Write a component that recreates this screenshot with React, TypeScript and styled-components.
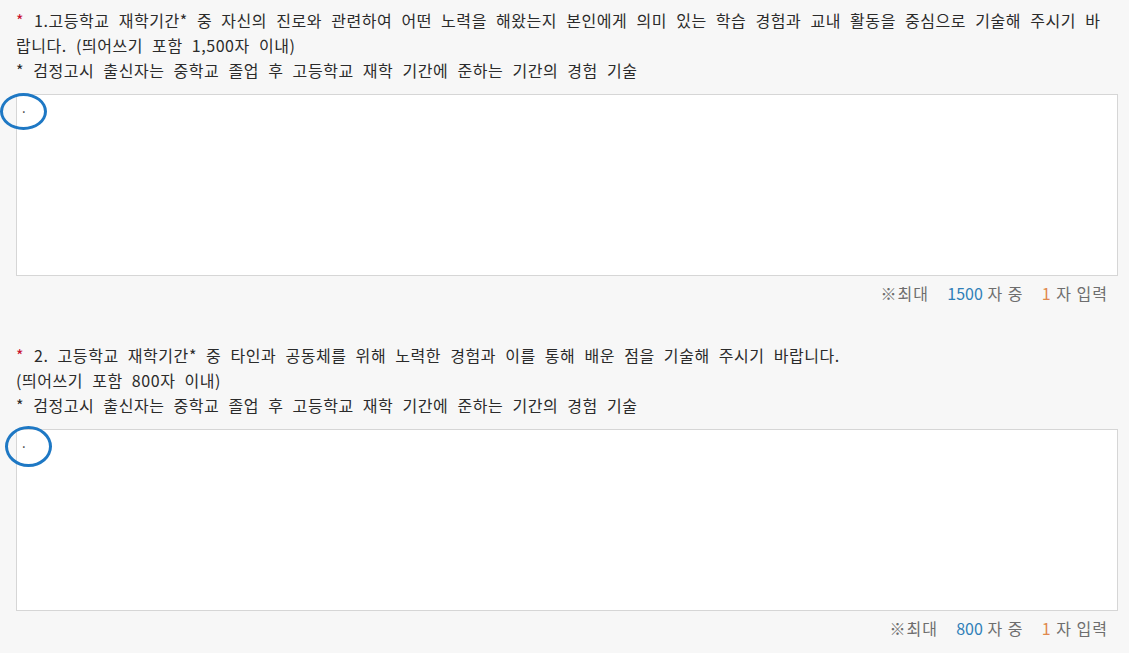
import React from "react";
import styled, { createGlobalStyle } from "styled-components";

const Global = createGlobalStyle`
  html, body { margin: 0; padding: 0; background: #f7f7f7; }
  body { font-family: "Noto Sans CJK KR", "Noto Sans", sans-serif; }
`;

const Page = styled.div`
  padding: 8px 11px 0 16px;
  display: flex;
  flex-direction: column;
  gap: 37px;
`;

const Question = styled.section`
  display: flex;
  flex-direction: column;
`;

const Prompt = styled.div`
  font-size: 16px;
  line-height: 25px;
  color: #2b2b2b;
  white-space: nowrap;
  letter-spacing: 0.55px;
  word-spacing: 5px;
`;

const Line = styled.div``;

const Req = styled.span`
  color: #c8102e;
  margin-right: 10px;
`;

const FieldWrap = styled.div`
  position: relative;
  margin-top: 11px;
`;

const Area = styled.textarea`
  display: block;
  box-sizing: border-box;
  width: 100%;
  height: 182px;
  margin: 0;
  padding: 3px 5px;
  border: 1px solid #d6d6d6;
  background: #fff;
  resize: none;
  outline: none;
  font-family: "Noto Sans CJK KR", sans-serif;
  font-size: 13px;
  color: #333;
`;

const Mark = styled.div<{ $l: number; $t: number; $w: number; $h: number }>`
  position: absolute;
  left: ${(p) => p.$l}px;
  top: ${(p) => p.$t}px;
  width: ${(p) => p.$w}px;
  height: ${(p) => p.$h}px;
  box-sizing: border-box;
  border: 3px solid #1e78c4;
  border-radius: 50%;
  pointer-events: none;
`;

const Counter = styled.div`
  display: flex;
  justify-content: flex-end;
  align-items: center;
  margin-top: 5px;
  padding-right: 10px;
  font-size: 16px;
  line-height: 25px;
  letter-spacing: 1px;
  color: #6e6e6e;
  white-space: pre;
`;

const Max = styled.span`
  color: #2f7fb8;
  letter-spacing: 0;
`;

const Now = styled.span`
  color: #e0894e;
`;

export default function App() {
  return (
    <>
      <Global />
      <Page>
        <Question>
          <Prompt>
            <Line>
              <Req>*</Req>1.고등학교 재학기간* 중 자신의 진로와 관련하여 어떤 노력을 해왔는지 본인에게 의미 있는 학습 경험과 교내 활동을 중심으로 기술해 주시기 바
            </Line>
            <Line>랍니다. (띄어쓰기 포함 1,500자 이내)</Line>
            <Line>* 검정고시 출신자는 중학교 졸업 후 고등학교 재학 기간에 준하는 기간의 경험 기술</Line>
          </Prompt>
          <FieldWrap>
            <Area defaultValue="." />
            <Mark $l={-16} $t={-1} $w={47} $h={37} />
          </FieldWrap>
          <Counter>
            ※최대    <Max>1500</Max> 자 중    <Now>1</Now> 자 입력
          </Counter>
        </Question>
        <Question>
          <Prompt>
            <Line>
              <Req>*</Req>2. 고등학교 재학기간* 중 타인과 공동체를 위해 노력한 경험과 이를 통해 배운 점을 기술해 주시기 바랍니다.
            </Line>
            <Line>(띄어쓰기 포함 800자 이내)</Line>
            <Line>* 검정고시 출신자는 중학교 졸업 후 고등학교 재학 기간에 준하는 기간의 경험 기술</Line>
          </Prompt>
          <FieldWrap>
            <Area defaultValue="." />
            <Mark $l={-11} $t={-3} $w={47} $h={41} />
          </FieldWrap>
          <Counter>
            ※최대    <Max>800</Max> 자 중    <Now>1</Now> 자 입력
          </Counter>
        </Question>
      </Page>
    </>
  );
}
